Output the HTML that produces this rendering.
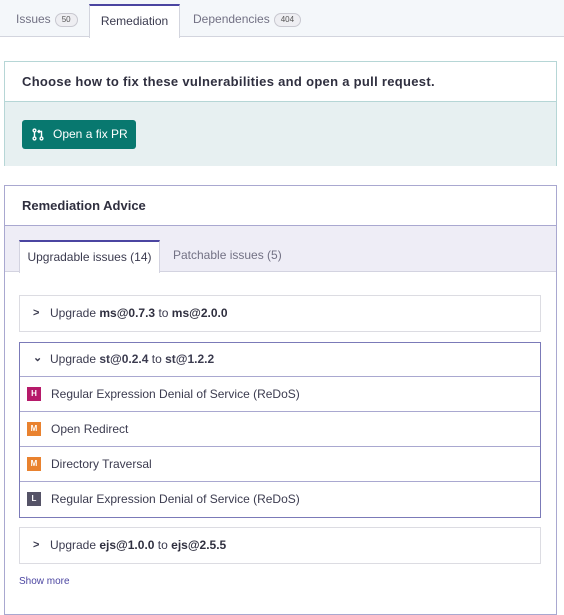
<!DOCTYPE html>
<html><head><meta charset="utf-8"><style>
*{box-sizing:border-box;margin:0;padding:0}
body{width:564px;height:598px;overflow:hidden;background:#fff;font-family:"Liberation Sans",sans-serif;color:#3b3b4f;font-size:12px;position:relative}
.abs{position:absolute}
.tabs{left:0;top:0;width:564px;height:37px;background:#f4f7fa;border-bottom:1px solid #d3d5de}
.tab{top:0;height:37px;line-height:38px;font-size:12px;color:#727184}
.badge{display:inline-block;border:1px solid #c8c8d0;border-radius:9px;background:#eeeef2;font-size:8px;line-height:12px;padding:0 6px;margin-left:4px;vertical-align:1px;color:#555}
.act{left:89px;width:91px;top:4px;height:34px;line-height:31px;background:#fff;border-top:2px solid #4b45a1;border-left:1px solid #d3d5de;border-right:1px solid #d3d5de;text-align:center;color:#3b3b4f}
.b1{left:4px;top:61px;width:553px;height:105px;border:1px solid #b6d6d6;border-bottom:none}
.b1h{height:40px;background:#fff;border-bottom:1px solid #b6d6d6;padding-left:17px;line-height:40px;font-weight:bold;font-size:13px;color:#2f2f3f;letter-spacing:0.3px}
.b1b{height:64px;background:#e7f0f1}
.btn{left:22px;top:120px;width:114px;height:29px;background:#08786f;border-radius:3px;color:#fff;font-size:12px;line-height:29px;padding-left:31px}
.b2{left:4px;top:185px;width:553px;height:430px;border:1px solid #a9a8d0}
.b2h{height:40px;border-bottom:1px solid #a9a8d0;padding-left:17px;line-height:40px;font-weight:bold;font-size:13px;color:#2f2f3f}
.b2t{height:46px;background:#eeedf6;border-bottom:1px solid #d3d3e0;position:relative}
.t2{position:absolute;top:14px;height:33px;line-height:31px;font-size:12px}
.acc{left:19px;width:522px;border:1px solid #dcdce2;height:37px;line-height:35px;padding-left:30px;font-size:12px}
.acc b{color:#2f2f3f}
.chev{position:absolute;left:13px;top:0;font-size:11px;font-weight:bold}
.open{left:19px;top:342px;width:522px;height:176px;border:1px solid #7b7ab8}
.row{height:35px;border-top:1px solid #a9a8d0;line-height:34px;padding-left:31px;position:relative}
.sev{position:absolute;left:7px;top:10px;width:14px;height:14px;color:#fff;font-size:8px;font-weight:bold;text-align:center;line-height:14px}
</style></head><body>
<div class="abs tabs"></div>
<div class="abs tab" style="left:16px">Issues<span class="badge">50</span></div>
<div class="abs tab act">Remediation</div>
<div class="abs tab" style="left:193px">Dependencies<span class="badge">404</span></div>

<div class="abs b1"><div class="b1h">Choose how to fix these vulnerabilities and open a pull request.</div><div class="b1b"></div></div>
<div class="abs btn"><svg class="abs" style="left:10px;top:8px" width="12" height="13" viewBox="0 0 12 13" fill="none" stroke="#fff" stroke-width="1.4"><circle cx="2.5" cy="2.5" r="1.4"/><circle cx="2.5" cy="10.5" r="1.4"/><path d="M2.5 4v5"/><circle cx="9.5" cy="10.5" r="1.4"/><path d="M9.5 9V3.5H6M7.5 2L6 3.5 7.5 5"/></svg>Open a fix PR</div>

<div class="abs b2"><div class="b2h">Remediation Advice</div>
<div class="b2t">
<div class="t2" style="left:14px;width:141px;background:#fff;border-top:2px solid #4b45a1;border-left:1px solid #d3d3e0;border-right:1px solid #d3d3e0;text-align:center;color:#3b3b4f">Upgradable issues (14)</div>
<div class="t2" style="left:168px;color:#727184">Patchable issues (5)</div>
</div></div>

<div class="abs acc" style="top:295px"><span class="chev">&gt;</span>Upgrade <b>ms@0.7.3</b> to <b>ms@2.0.0</b></div>
<div class="abs open">
<div style="height:33px;line-height:33px;padding-left:30px;position:relative"><span class="chev" style="top:-1px">&#8964;</span>Upgrade <b>st@0.2.4</b> to <b>st@1.2.2</b></div>
<div class="row"><span class="sev" style="background:#b61a6a">H</span>Regular Expression Denial of Service (ReDoS)</div>
<div class="row"><span class="sev" style="background:#e9822f">M</span>Open Redirect</div>
<div class="row"><span class="sev" style="background:#e9822f">M</span>Directory Traversal</div>
<div class="row"><span class="sev" style="background:#555367">L</span>Regular Expression Denial of Service (ReDoS)</div>
</div>
<div class="abs acc" style="top:527px"><span class="chev">&gt;</span>Upgrade <b>ejs@1.0.0</b> to <b>ejs@2.5.5</b></div>
<div class="abs" style="left:19px;top:576px;font-size:10px;color:#4b45a1">Show more</div>
</body></html>
